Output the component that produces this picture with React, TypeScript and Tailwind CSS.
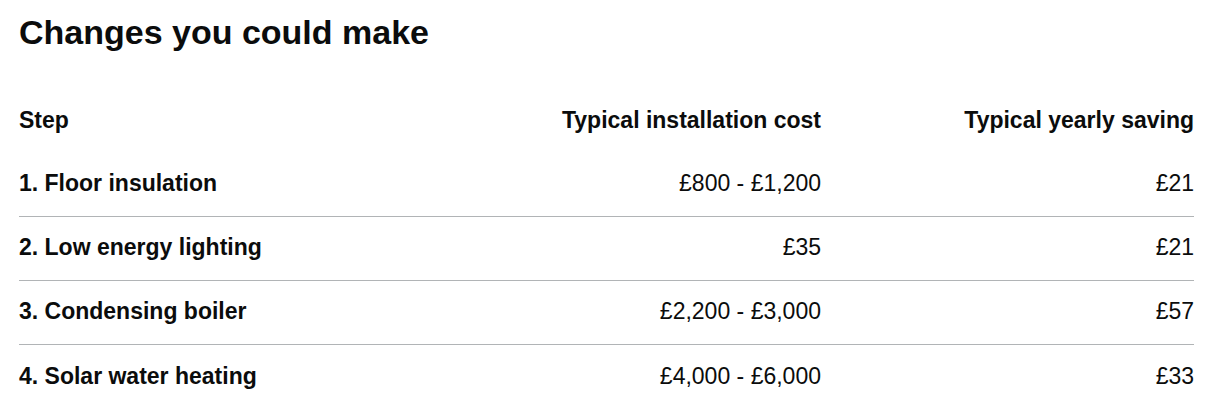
const rows = [
  { step: '1. Floor insulation', cost: '£800 - £1,200', saving: '£21' },
  { step: '2. Low energy lighting', cost: '£35', saving: '£21' },
  { step: '3. Condensing boiler', cost: '£2,200 - £3,000', saving: '£57' },
  { step: '4. Solar water heating', cost: '£4,000 - £6,000', saving: '£33' },
]

export default function App() {
  return (
    <div className="min-h-[412px] bg-white px-[19px] pt-[12px] text-[#0b0c0c] font-['Liberation_Sans',Arial,sans-serif]">
      <h2 className="text-[34px] leading-[40px] font-bold">Changes you could make</h2>

      <div className="mt-[37px] w-[1175px] text-[23px] leading-[28px]">
        <div className="grid grid-cols-[422px_380px_373px] h-[64px] pb-[2px] items-center font-bold">
          <div>Step</div>
          <div className="text-right">Typical installation cost</div>
          <div className="text-right">Typical yearly saving</div>
        </div>
        {rows.map((r, i) => (
          <div
            key={r.step}
            className={`grid grid-cols-[422px_380px_373px] h-[64px] pb-[3px] items-center ${i < rows.length - 1 ? 'border-b border-[#b1b4b6]' : ''}`}
          >
            <div className="font-bold">{r.step}</div>
            <div className="text-right">{r.cost}</div>
            <div className="text-right">{r.saving}</div>
          </div>
        ))}
      </div>
    </div>
  )
}
